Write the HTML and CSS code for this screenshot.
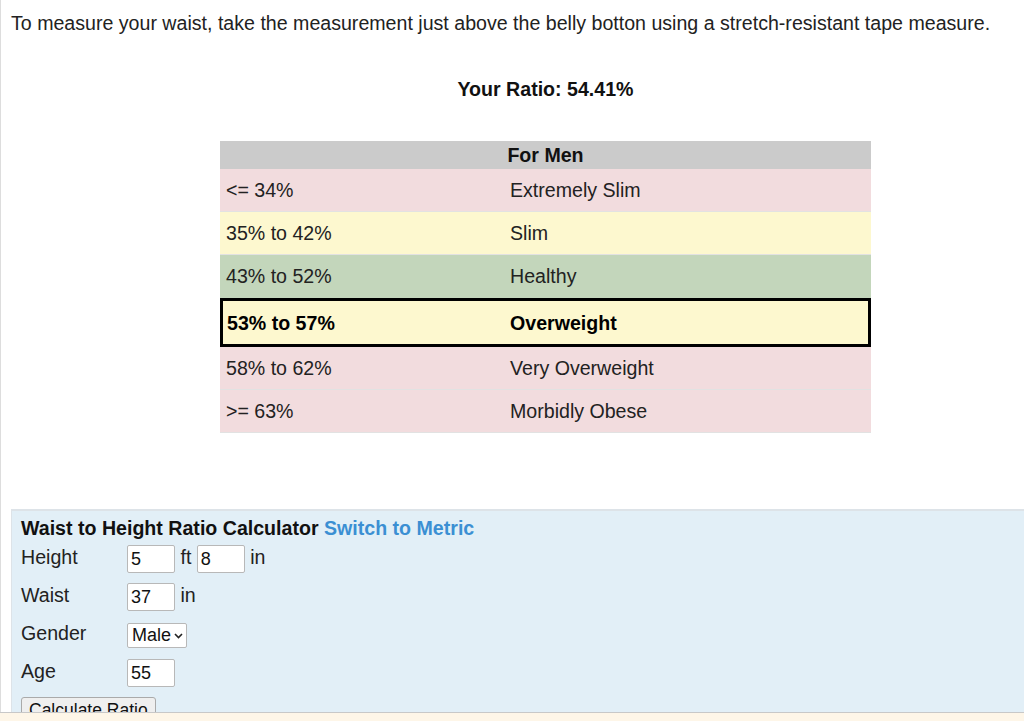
FILE: index.html
```html
<!DOCTYPE html>
<html lang="en">
<head>
    <meta charset="UTF-8">
    <meta name="viewport" content="width=device-width, initial-scale=1.0">
    <title>Waist to Height Ratio</title>
    <link rel="stylesheet" href="styles.css">
</head>
<body>
    <div class="page">
        <p class="intro">To measure your waist, take the measurement just above the belly botton using a stretch-resistant tape measure.</p>

        <p class="result">Your Ratio: 54.41%</p>

        <table class="ratios">
            <tr>
                <th colspan="2">For Men</th>
            </tr>
            <tr class="bad">
                <td class="range">&lt;= 34%</td>
                <td>Extremely Slim</td>
            </tr>
            <tr class="warn">
                <td class="range">35% to 42%</td>
                <td>Slim</td>
            </tr>
            <tr class="good">
                <td class="range">43% to 52%</td>
                <td>Healthy</td>
            </tr>
            <tr class="warn current">
                <td class="range">53% to 57%</td>
                <td>Overweight</td>
            </tr>
            <tr class="bad">
                <td class="range">58% to 62%</td>
                <td>Very Overweight</td>
            </tr>
            <tr class="bad">
                <td class="range">&gt;= 63%</td>
                <td>Morbidly Obese</td>
            </tr>
        </table>

        <form class="calc">
            <h3>Waist to Height Ratio Calculator <a href="#">Switch to Metric</a></h3>
            <div class="row">
                <label>Height</label>
                <span><input type="text" value="5"> ft <input type="text" value="8"> in</span>
            </div>
            <div class="row">
                <label>Waist</label>
                <span><input type="text" value="37"> in</span>
            </div>
            <div class="row">
                <label>Gender</label>
                <span class="select-wrap">
                    <select>
                        <option>Male</option>
                        <option>Female</option>
                    </select>
                    <svg class="chevron" width="9" height="6" viewBox="0 0 9 6"><path d="M1 1 L4.5 4.5 L8 1" fill="none" stroke="#222" stroke-width="1.6"/></svg>
                </span>
            </div>
            <div class="row">
                <label>Age</label>
                <span><input type="text" value="55"></span>
            </div>
            <button type="button">Calculate Ratio</button>
        </form>
    </div>
    <div class="bottom-bar"></div>
</body>
</html>
```

FILE: styles.css
```css
*{
    margin: 0;
    padding: 0;
    box-sizing: border-box;
}
html, body{
    overflow: hidden;
}
body{
    font-family: "Liberation Sans", Arial, sans-serif;
    font-size: 19.6px;
    color: #222;
    background: #fff;
}
.page{
    min-height: 721px;
    border-left: 1px solid #ddd;
    padding: 12px 0 0 10px;
}
.intro{
    line-height: 22px;
}
.result{
    margin-top: 44px;
    padding-left: 56px;
    text-align: center;
    font-weight: bold;
    line-height: 22px;
    color: #111;
}
.ratios{
    width: 651px;
    margin: 41px 0 0 209px;
    border-spacing: 0;
    border-collapse: separate;
}
.ratios th{
    background: #cbcbcb;
    padding: 3px 6px;
    line-height: 22px;
    font-weight: bold;
    color: #111;
}
.ratios td{
    padding: 10px 6px;
    line-height: 22px;
    border-bottom: 1px solid #e2e2e2;
}
.ratios td.range{
    width: 284px;
}
.ratios tr.bad td{
    background: #f2dcde;
}
.ratios tr.warn td{
    background: #fdf8cf;
}
.ratios tr.good td{
    background: #c3d6bb;
    border-bottom-color: #c3d6bb;
}
.ratios tr.current td{
    font-weight: bold;
    color: #000;
    border-top: 3px solid #000;
    border-bottom: 3px solid #000;
    padding-top: 11px;
    padding-bottom: 10px;
}
.ratios tr.current td:first-child{
    border-left: 3px solid #000;
    padding-left: 4px;
}
.ratios tr.current td:last-child{
    border-right: 3px solid #000;
}
.calc{
    margin-top: 76px;
    background: #e2eff7;
    border-top: 2px solid #dde3e8;
    border-left: 1px solid #dde3e8;
    padding: 6px 10px 20px 9px;
}
.calc h3{
    font-size: 19.6px;
    line-height: 23px;
    color: #111;
}
.calc h3 a{
    color: #3b8fd3;
    text-decoration: none;
}
.calc .row{
    display: grid;
    grid-template-columns: 106px auto;
    align-items: center;
    height: 38px;
}
.calc .row label{
    padding-bottom: 4px;
}
.calc input{
    width: 48px;
    height: 28px;
    font-family: "Liberation Sans", Arial, sans-serif;
    font-size: 18px;
    padding: 0 3px;
    border: 1px solid #b8b8b8;
    border-radius: 2px;
    background: #fff;
    color: #111;
    vertical-align: middle;
}
.select-wrap{
    position: relative;
    display: inline-block;
    width: 60px;
}
.calc select{
    appearance: none;
    -webkit-appearance: none;
    width: 60px;
    height: 25px;
    font-family: "Liberation Sans", Arial, sans-serif;
    font-size: 18px;
    border: 1px solid #b8b8b8;
    border-radius: 2px;
    background: #fff;
    color: #111;
    padding: 0 0 0 4px;
    display: block;
}
.chevron{
    position: absolute;
    right: 4px;
    top: 10px;
    pointer-events: none;
}
.calc button{
    margin-top: 5px;
    font-family: "Liberation Sans", Arial, sans-serif;
    font-size: 17.5px;
    padding: 2px 7px;
    border: 1px solid #aaa;
    border-radius: 3px;
    background: #efefef;
    color: #111;
}
.bottom-bar{
    position: fixed;
    left: 0;
    right: 0;
    bottom: 0;
    height: 9px;
    background: #fef6e8;
    border-top: 1px solid #c8c8c8;
}
```
